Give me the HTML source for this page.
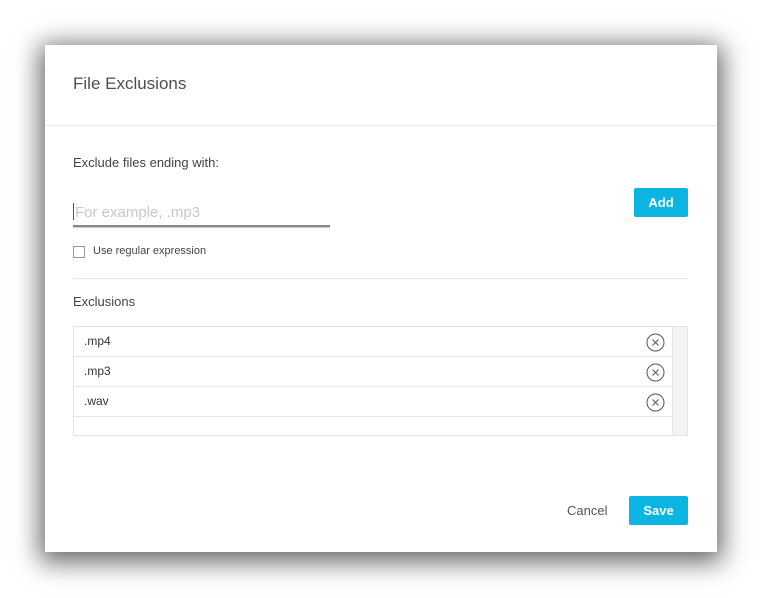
<!DOCTYPE html>
<html><head><style>
body{margin:0;width:762px;height:598px;background:#fff;font-family:"Liberation Sans",sans-serif;position:relative;overflow:hidden}
.dlg{position:absolute;left:45px;top:45px;width:672px;height:507px;background:#fff;box-shadow:0 5px 24px 5px rgba(0,0,0,.6)}
.a{position:absolute}
.btn{position:absolute;background:#0cb4e2;color:#fff;font-weight:bold;font-size:13px;text-align:center;border-radius:2px}
.row{position:absolute;left:0;width:598px;height:29px;border-bottom:1px solid #e6e6e6;font-size:12px;color:#333}
.row span{position:absolute;left:10px;top:7px}
.row svg{position:absolute;left:572px;top:6px}
</style></head><body>
<div class="dlg">
<div class="a" style="left:28px;top:29px;font-size:17px;color:#4a4f57">File Exclusions</div>
<div class="a" style="left:0;top:80px;width:672px;height:1px;background:#e6e6e6"></div>
<div class="a" style="left:28px;top:110px;font-size:13px;color:#3f444b">Exclude files ending with:</div>
<div class="a" style="left:28px;top:158px;font-size:15px;color:#c8c8c8"><span style="display:inline-block;width:1px;height:17px;background:#555;vertical-align:-3px;margin-right:1px"></span>For example, .mp3</div>
<div class="a" style="left:28px;top:180px;width:257px;height:2px;background:#888;border-bottom:1px solid #ccc"></div>
<div class="btn" style="left:589px;top:143px;width:54px;height:29px;line-height:29px">Add</div>
<div class="a" style="left:28px;top:201px;width:10px;height:10px;border:1px solid #999"></div>
<div class="a" style="left:48px;top:200px;font-size:11px;color:#444">Use regular expression</div>
<div class="a" style="left:28px;top:233px;width:615px;height:1px;background:#e6e6e6"></div>
<div class="a" style="left:28px;top:249px;font-size:13px;color:#3f444b">Exclusions</div>
<div class="a" style="left:28px;top:281px;width:613px;height:108px;border:1px solid #e3e3e3;overflow:hidden">
<div class="a" style="left:598px;top:0;width:15px;height:108px;background:#f5f5f5;border-left:1px solid #e6e6e6"></div>
<div class="row" style="top:0"><span>.mp4</span><svg width="19" height="19"><circle cx="9.5" cy="9.5" r="8.5" fill="none" stroke="#555"/><path d="M6.5 6.5l6 6M12.5 6.5l-6 6" stroke="#555"/></svg></div>
<div class="row" style="top:30px"><span>.mp3</span><svg width="19" height="19"><circle cx="9.5" cy="9.5" r="8.5" fill="none" stroke="#555"/><path d="M6.5 6.5l6 6M12.5 6.5l-6 6" stroke="#555"/></svg></div>
<div class="row" style="top:60px"><span>.wav</span><svg width="19" height="19"><circle cx="9.5" cy="9.5" r="8.5" fill="none" stroke="#555"/><path d="M6.5 6.5l6 6M12.5 6.5l-6 6" stroke="#555"/></svg></div>
</div>
<div class="a" style="left:522px;top:458px;font-size:13px;color:#555">Cancel</div>
<div class="btn" style="left:584px;top:451px;width:59px;height:29px;line-height:29px">Save</div>
</div>
</body></html>
